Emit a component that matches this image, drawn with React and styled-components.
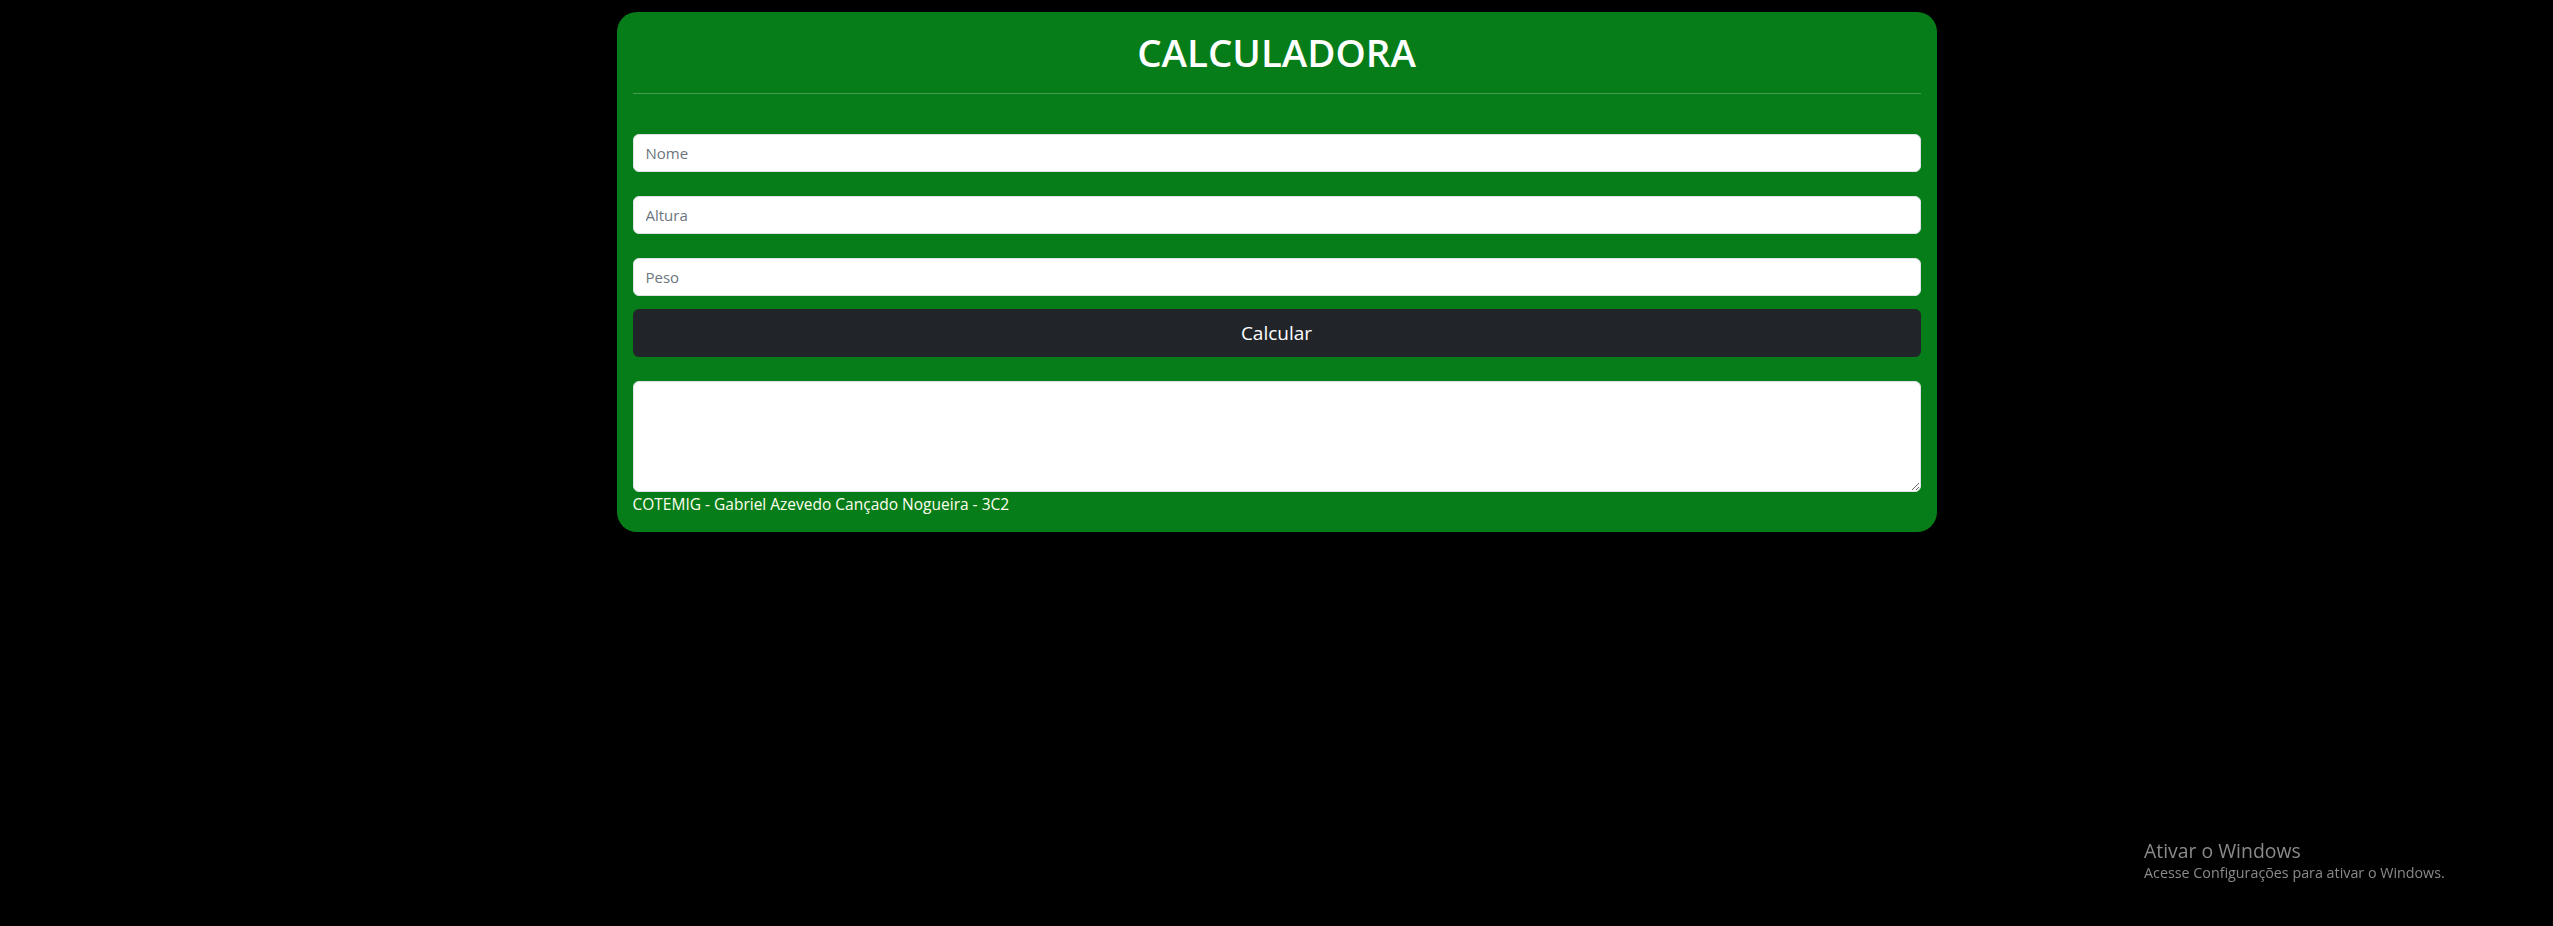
import React from 'react';
import styled, { createGlobalStyle } from 'styled-components';

const GlobalStyle = createGlobalStyle`
  html, body {
    margin: 0;
    background-color: #000;
    font-family: 'Open Sans', 'Noto Sans', sans-serif;
  }

  * {
    box-sizing: border-box;
  }
`;

const Page = styled.div`
  min-height: 926px;
  padding-top: 12px;
`;

const Card = styled.main`
  width: 1320px;
  margin: 0 auto;
  padding: 16px;
  background-color: #077d19;
  border-radius: 20px;
  color: #fff;
`;

const Title = styled.h1`
  margin: 0;
  font-size: 38.5px;
  font-weight: 600;
  line-height: 49px;
  text-align: center;
`;

const Divider = styled.hr`
  margin: 16px 0 40px;
  border: 0;
  border-top: 1px solid rgba(255, 255, 255, 0.25);
`;

const Form = styled.form`
  display: flex;
  flex-direction: column;
`;

const Input = styled.input`
  display: block;
  width: 100%;
  height: 38px;
  margin-bottom: ${({ $gap }) => $gap}px;
  padding: 6px 12px;
  font-family: inherit;
  font-size: 15px;
  color: #212529;
  background-color: #fff;
  border: 1px solid #dee2e6;
  border-radius: 6px;
  outline: none;

  &::placeholder {
    color: #6c757d;
  }
`;

const Button = styled.button`
  width: 100%;
  height: 48px;
  margin-bottom: 24px;
  font-family: inherit;
  font-size: 19px;
  color: #fff;
  background-color: #212529;
  border: none;
  border-radius: 6px;
`;

const Result = styled.textarea`
  display: block;
  width: 100%;
  height: 111px;
  padding: 6px 12px;
  font-family: inherit;
  font-size: 16px;
  background-color: #fff;
  border: 1px solid #dee2e6;
  border-radius: 6px;
  outline: none;
`;

const Footer = styled.p`
  margin: 0;
  font-size: 15.5px;
  line-height: 24px;
  color: #fffff0;
`;

const Watermark = styled.div`
  position: fixed;
  left: 2144px;
  top: 839px;
  color: #8a8a8a;
`;

const WatermarkTitle = styled.div`
  font-size: 19.4px;
  line-height: 24px;
`;

const WatermarkText = styled.div`
  font-size: 14.3px;
  line-height: 20px;
`;

const App = () => (
  <>
    <GlobalStyle />
    <Page>
      <Card>
        <Title>CALCULADORA</Title>
        <Divider />
        <Form onSubmit={(e) => e.preventDefault()}>
          <Input $gap={24} placeholder="Nome" />
          <Input $gap={24} placeholder="Altura" />
          <Input $gap={13} placeholder="Peso" />
          <Button type="submit">Calcular</Button>
          <Result rows={4} />
        </Form>
        <Footer>COTEMIG - Gabriel Azevedo Cançado Nogueira - 3C2</Footer>
      </Card>
    </Page>
    <Watermark>
      <WatermarkTitle>Ativar o Windows</WatermarkTitle>
      <WatermarkText>Acesse Configurações para ativar o Windows.</WatermarkText>
    </Watermark>
  </>
);

export default App;
